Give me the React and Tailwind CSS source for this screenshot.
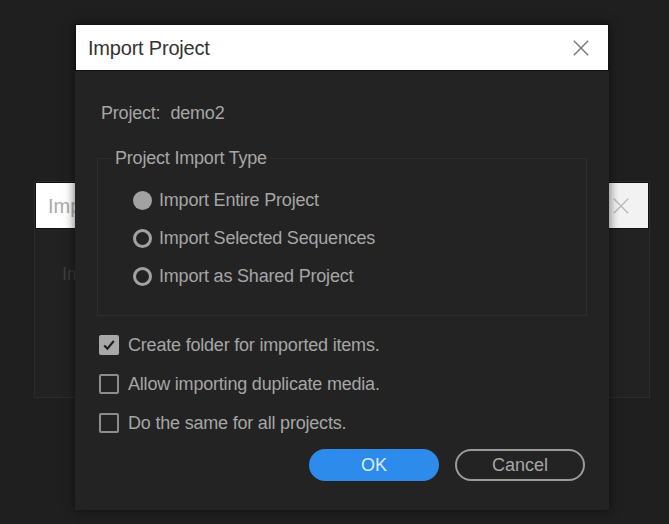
import React from 'react';

const font = { fontFamily: '"Liberation Sans", Arial, sans-serif' };

function CloseIcon({ className }) {
  return (
    <svg viewBox="0 0 20 20" className={className} fill="none" stroke="currentColor" strokeWidth="1.6">
      <path d="M2 2 L18 18 M18 2 L2 18" />
    </svg>
  );
}

function Radio({ checked, label }) {
  return (
    <div className="flex items-center h-[20px] gap-[7px]">
      {checked ? (
        <span className="w-[19px] h-[19px] rounded-full bg-[#a2a2a2]" />
      ) : (
        <span className="w-[19px] h-[19px] rounded-full border-[3px] border-[#a2a2a2]" />
      )}
      <span className="text-[18px] text-[#a6a6a6] tracking-[-0.2px]">{label}</span>
    </div>
  );
}

function Check({ checked, label }) {
  return (
    <div className="flex items-center h-[20px] gap-[9px]">
      {checked ? (
        <span className="w-[20px] h-[20px] rounded-[2px] bg-[#a8a8a8] flex items-center justify-center">
          <svg viewBox="0 0 20 20" className="w-[16px] h-[16px]" fill="none" stroke="#1e1e1e" strokeWidth="2.6">
            <path d="M4 10.5 L8 14.5 L16 5" />
          </svg>
        </span>
      ) : (
        <span className="w-[20px] h-[20px] rounded-[2px] border-2 border-[#8c8c8c]" />
      )}
      <span className="text-[18px] text-[#a6a6a6] tracking-[-0.2px]">{label}</span>
    </div>
  );
}

export default function App() {
  return (
    <div className="relative w-[669px] h-[524px] bg-[#1f1f1f] overflow-hidden" style={font}>
      {/* Dialog behind */}
      <div className="absolute left-[34px] top-[181px] w-[616px] h-[217px] flex flex-col bg-[#222222] border border-[#2c2c2c]">
        <div className="h-[47px] bg-gradient-to-r from-white to-[#f2f2f2] flex items-center justify-between pl-[12px] pr-[18px] border border-[#111]">
          <span className="text-[20px] text-[#aaaaaa]">Import Project</span>
          <CloseIcon className="w-[18px] h-[18px] text-[#bbbbbb]" />
        </div>
        <div className="flex-1 pl-[27px] pt-[32px]">
          <span className="text-[18px] text-[#3e3e3e]">Import</span>
        </div>
      </div>

      {/* Main dialog */}
      <div className="absolute left-[75px] top-[24px] w-[534px] h-[486px] flex flex-col bg-[#232323] shadow-[0_0_10px_rgba(0,0,0,0.6)]">
        <div className="h-[47px] bg-white flex items-center justify-between pl-[12px] pr-[18px] border border-[#111]">
          <span className="text-[20px] text-[#333333] tracking-[-0.2px]">Import Project</span>
          <CloseIcon className="w-[18px] h-[18px] text-[#777777]" />
        </div>

        <div className="flex flex-col px-[22px]">
          <div className="mt-[32px] ml-[4px] h-[20px] flex items-center gap-[10px] text-[18px] text-[#a6a6a6] tracking-[-0.2px]">
            <span>Project:</span>
            <span>demo2</span>
          </div>

          <fieldset className="mt-[25px] border border-[#2e2e2e] pb-[29px]">
            <legend className="ml-[14px] px-[3px] h-[20px] text-[18px] text-[#a6a6a6] leading-[20px] tracking-[-0.2px]">
              Project Import Type
            </legend>
            <div className="flex flex-col gap-[18px] pt-[22px] pl-[35px]">
              <Radio checked label="Import Entire Project" />
              <Radio label="Import Selected Sequences" />
              <Radio label="Import as Shared Project" />
            </div>
          </fieldset>

          <div className="mt-[19px] ml-[2px] flex flex-col gap-[19px]">
            <Check checked label="Create folder for imported items." />
            <Check label="Allow importing duplicate media." />
            <Check label="Do the same for all projects." />
          </div>

          <div className="mt-[16px] flex justify-end gap-[16px] pr-[2px]">
            <button className="w-[130px] h-[32px] rounded-full bg-[#2d8ceb] text-[18px] text-[#dcebfa]">
              OK
            </button>
            <button className="w-[130px] h-[32px] rounded-full border-2 border-[#9a9a9a] text-[18px] text-[#a6a6a6]">
              Cancel
            </button>
          </div>
        </div>
      </div>
    </div>
  );
}
